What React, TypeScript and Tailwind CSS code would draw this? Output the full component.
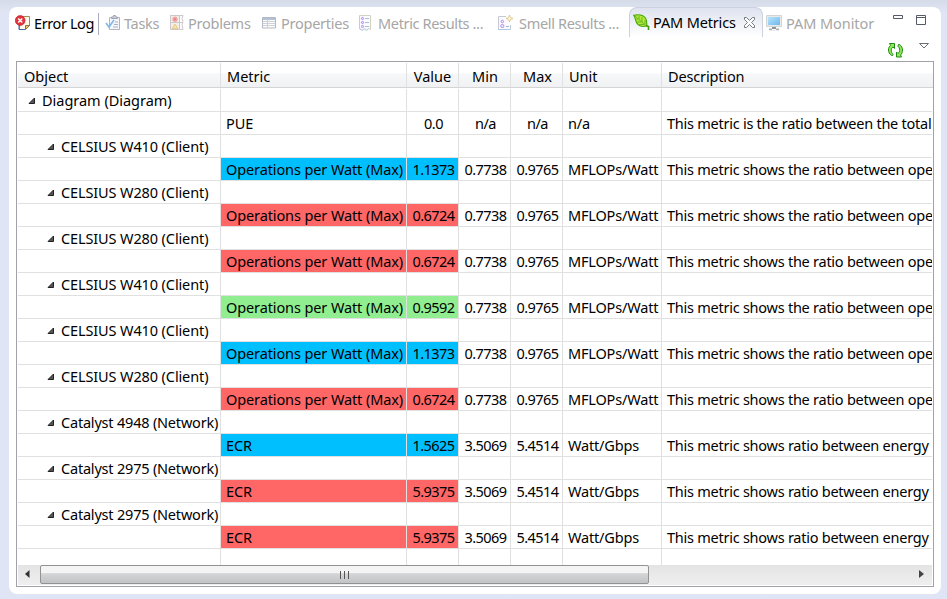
import type { ReactNode } from "react";

type Row = {
  object?: string;
  level?: number;
  metric?: string;
  value?: string;
  min?: string;
  max?: string;
  unit?: string;
  description?: string;
  tone?: "blue" | "red" | "green";
};

const tones = { blue: "bg-[#00bfff]", red: "bg-[#ff6666]", green: "bg-[#90ee90]" };

const client = (object: string, value: string, tone: Row["tone"]): Row[] => [
  { object, level: 1 },
  { metric: "Operations per Watt (Max)", value, min: "0.7738", max: "0.9765", unit: "MFLOPs/Watt", description: "This metric shows the ratio between ope", tone },
];
const network = (object: string, value: string, tone: Row["tone"]): Row[] => [
  { object, level: 1 },
  { metric: "ECR", value, min: "3.5069", max: "5.4514", unit: "Watt/Gbps", description: "This metric shows ratio between energy", tone },
];

const rows: Row[] = [
  { object: "Diagram (Diagram)", level: 0 },
  { metric: "PUE", value: "0.0", min: "n/a", max: "n/a", unit: "n/a", description: "This metric is the ratio between the total" },
  ...client("CELSIUS W410 (Client)", "1.1373", "blue"),
  ...client("CELSIUS W280 (Client)", "0.6724", "red"),
  ...client("CELSIUS W280 (Client)", "0.6724", "red"),
  ...client("CELSIUS W410 (Client)", "0.9592", "green"),
  ...client("CELSIUS W410 (Client)", "1.1373", "blue"),
  ...client("CELSIUS W280 (Client)", "0.6724", "red"),
  ...network("Catalyst 4948 (Network)", "1.5625", "blue"),
  ...network("Catalyst 2975 (Network)", "5.9375", "red"),
  ...network("Catalyst 2975 (Network)", "5.9375", "red"),
];

const columns = "grid grid-cols-[203px_186px_52px_52px_52px_99px_270px]";
const cell = "overflow-hidden border-r border-[#e0e0e0] whitespace-pre";

function ErrorLogIcon() {
  return (
    <svg width="16" height="16" viewBox="0 0 16 16" className="shrink-0">
      <path d="M6 1.5h8.5v9l-4 4H4.5V9" fill="#fffbe8" stroke="#a58b50" />
      <path d="M14.5 10.5h-4v4z" fill="#e8c770" stroke="#8a7540" />
      <path d="M4 10v4.5h6" fill="none" stroke="#47649c" />
      <circle cx="5.2" cy="5.5" r="4.9" fill="#e3343e" stroke="#b81722" strokeWidth=".6" />
      <path d="M3.2 3.5l4 4m0-4l-4 4" stroke="#fff" strokeWidth="1.6" />
    </svg>
  );
}
function TasksIcon() {
  return (
    <svg width="16" height="16" viewBox="0 0 16 16" className="shrink-0">
      <path d="M4.5 2.5h10v12h-10z" fill="#f4f6fb" stroke="#b0b4bf" />
      <path d="M6.5 3.5V2h1.5l.5-1.5h2L11 2h1.5v1.5z" fill="#c9ccd6" stroke="#a2a7b5" />
      <path d="M10 7h3M9 9.5h4M8 12h5" stroke="#a9b2c8" />
      <path d="M1 8l3 4 5-7" fill="none" stroke="#86b8e6" strokeWidth="1.7" />
    </svg>
  );
}
function ProblemsIcon() {
  return (
    <svg width="14" height="16" viewBox="0 0 14 16" className="shrink-0">
      <path d="M.5.5h9v14h-9z" fill="#f3efe9" stroke="#cbc7ca" />
      <path d="M9.500.5h3.500l-1 3 1 3-1 3 1 5H9.500M.5 7.500h12" fill="none" stroke="#cbc7ca" />
      <circle cx="5" cy="4.3" r="2.7" fill="#f3abab" />
      <path d="M3.900 3.200l2.200 2.200m0-2.200L3.900 5.400" stroke="#e8777e" />
      <path d="M5 9l2.800 4.600H2.200z" fill="#f8e3b0" stroke="#e5c078" strokeWidth=".8" />
    </svg>
  );
}
function PropertiesIcon() {
  return (
    <svg width="14" height="12" viewBox="0 0 14 12" className="shrink-0">
      <path d="M.5.5h13v10.500H.5z" fill="#fcfcfa" stroke="#b3b8c4" />
      <path d="M1 1h12v2H1z" fill="#b7c1d5" />
      <path d="M1 4.500h12M1 6.500h12M1 8.500h12M5.500 3v8" stroke="#ced2d7" />
    </svg>
  );
}
function MetricResultsIcon() {
  return (
    <svg width="12" height="16" viewBox="0 0 12 16" className="shrink-0">
      <path d="M.5.5h11v14l-2-1-2 1.500-2-1.500-2 1.500-3-1.500z" fill="#fbfcff" stroke="#d0d2c4" />
      <path d="M.5 1v13l3 1.500 2-1.500 2 1.500 2-1.500" fill="none" stroke="#b8cfe7" />
      <path d="M6 3.500h4M6 7.500h4M6 11.500h4" stroke="#a9bddd" />
      <g fill="#eadcff" stroke="#b98bea"><circle cx="3.500" cy="3.500" r="1.100" /><circle cx="3.500" cy="7.500" r="1.100" /><circle cx="3.500" cy="11.500" r="1.100" /></g>
    </svg>
  );
}
function SmellResultsIcon() {
  return (
    <svg width="15" height="16" viewBox="0 0 15 16" className="shrink-0">
      <path d="M8 1.500H.5v13h12V10" fill="#fbfcff" stroke="#c5c9d2" />
      <path d="M.5 14.500h12" stroke="#a9c9e8" />
      <g fill="#f3eaff" stroke="#b88ceb"><circle cx="4.300" cy="6.500" r="1.300" /><circle cx="4.300" cy="11" r="1.600" /></g>
      <path d="M8 11.500h3" stroke="#9eb5da" />
      <path d="M11.500 0l1 2.500L15 3.500l-2.500 1-1 2.500-1-2.500L8 3.500l2.500-1z" fill="#fff5d9" stroke="#d9bf83" strokeWidth=".8" />
    </svg>
  );
}
function LeafIcon() {
  return (
    <svg width="17" height="17" viewBox="0 0 17 17" className="shrink-0">
      <path d="M.7 1.200C6 .2 10 .8 12.500 4c1.500 2.500 1.400 5 1.300 7.800-3 1-6.600.7-8.800-1.200C2 8.200 3 4.500.7 1.200z" fill="#b5e838" stroke="#45a50b" strokeWidth="1.100" />
      <path d="M2 2l12 10.500M6 5.500V2M9 8V3M12 10V6M5 5H3M8.500 8H4M11 10.500H6" fill="none" stroke="#5eb820" strokeWidth=".9" />
      <path d="M13 11.500l2.500 1v3.500" fill="none" stroke="#439b0b" strokeWidth="1.600" />
    </svg>
  );
}
function MonitorIcon() {
  return (
    <svg width="16" height="16" viewBox="0 0 16 16" className="shrink-0">
      <defs>
        <linearGradient id="screen" x2="1" y2="1"><stop stopColor="#b9e4fb" /><stop offset="1" stopColor="#6eb8ee" /></linearGradient>
      </defs>
      <path d="M.5.5h15v11H.5z" fill="#e9ebea" stroke="#d2d5d5" />
      <path d="M2 2h12v8H2z" fill="url(#screen)" />
      <path d="M6 12h4v2H6z" fill="#8f9499" />
      <path d="M3 13.500h3v1.500h4v-1.500h3v1.700H3z" fill="#a8aeb5" />
    </svg>
  );
}
function CloseIcon() {
  return (
    <svg width="11" height="11" viewBox="0 0 11 11" className="shrink-0">
      <path d="M.5.5h2L5.500 3.500 8.500.5h2v2L7.500 5.500l3 3v2h-2l-3-3-3 3h-2v-2l3-3-3-3z" fill="#fff" stroke="#666b73" strokeWidth=".9" />
    </svg>
  );
}
function RefreshIcon() {
  return (
    <svg width="15" height="15" viewBox="0 0 15 15">
      <g fill="#8fe85a" stroke="#1f8a12">
        <path d="M4.500 12.500h-1C1.500 11 .5 9.300.5 7s.8-3.600 2-4.500L1.500.5h5v5L5 4C3.800 4.800 3.300 5.800 3.300 7.300c0 1.700.5 2.900 1.700 3.900z" />
        <path d="M10.500 1.500h1c2 1.500 3 3.200 3 5.500s-.8 4.100-2 5l1 2h-5v-5l1.500 1.500c1.200-.8 1.700-1.800 1.700-3.300 0-1.700-.5-2.900-1.700-3.900z" />
      </g>
    </svg>
  );
}

function Tab({ icon, label, className }: { icon: ReactNode; label: string; className: string }) {
  return (
    <div className={`flex h-[31px] shrink-0 items-center whitespace-nowrap ${className}`}>
      {icon}
      <span className="leading-5">{label}</span>
    </div>
  );
}

function Expander() {
  return (
    <svg width="8" height="8" viewBox="0 0 8 8" className="shrink-0">
      <path d="M6.500 1v5.500H1z" fill="#555" stroke="#222" />
    </svg>
  );
}

function ObjectCell({ row }: { row: Row }) {
  if (!row.object) return null;
  return (
    <div className={`flex items-center gap-[6px] ${row.level ? "pl-[29px]" : "pl-[10px]"}`}>
      <Expander />
      <span className={row.object.startsWith("Cata") ? "tracking-[-0.2px]" : row.level ? "tracking-[-0.12px]" : "tracking-[-0.02px]"}>{row.object}</span>
    </div>
  );
}

export default function App() {
  return (
    <div className="h-[599px] w-[947px] overflow-hidden bg-linear-to-b from-[#d6dbe8] from-0% via-[#e0e5f5] via-2% to-[#dfe5f4] pt-[7px] pl-[9px] font-['Noto_Sans','Open_Sans',sans-serif] text-[14.5px] text-black">
      <div className="h-[587px] w-[932px] rounded-[8px] bg-white">
        <div className="flex h-[31px] text-[#a6a6a6]">
          <Tab icon={<ErrorLogIcon />} label="Error Log" className="w-[90px] gap-[3px] pl-[6px] tracking-[-0.4px] text-black" />
          <div className="mt-[6px] mr-[7px] -ml-px h-[22px] w-px bg-[#a7adbf]" />
          <Tab icon={<TasksIcon />} label="Tasks" className="-ml-px w-[65px] gap-[3px] tracking-[-0.3px]" />
          <Tab icon={<ProblemsIcon />} label="Problems" className="w-[92px] gap-[4px] tracking-[-0.25px]" />
          <Tab icon={<PropertiesIcon />} label="Properties" className="w-[97px] gap-[5px] tracking-[-0.25px]" />
          <Tab icon={<MetricResultsIcon />} label="Metric Results ..." className="w-[139px] gap-[7px] tracking-[-0.35px]" />
          <Tab icon={<SmellResultsIcon />} label="Smell Results ..." className="w-[131px] gap-[6px] tracking-[-0.32px]" />
          <div className="flex h-[30px] w-[134px] shrink-0 items-center rounded-t-[8px] border-x border-t border-[#cbd1df] bg-linear-to-b from-[#dfe3ef] to-white pl-[3px] text-black">
            <LeafIcon />
            <span className="ml-[3px] w-[91px] whitespace-nowrap tracking-[-0.15px]">PAM Metrics</span>
            <CloseIcon />
          </div>
          <Tab icon={<MonitorIcon />} label="PAM Monitor" className="w-[130px] gap-[4px] pl-[3px] tracking-[-0.07px]" />
          <svg width="38" height="18" viewBox="0 0 38 18" className="mt-[5px] shrink-0">
            <path d="M.5 3.500h9v3h-9zM23.500 3.500h9v9h-9zM23.500 5.500h9" fill="none" stroke="#555b66" />
          </svg>
        </div>
        <div className="flex h-[23px] items-start justify-end gap-4 pt-[5px] pr-[12px]">
          <RefreshIcon />
          <svg width="10" height="6" viewBox="0 0 10 6"><path d="M.5.5h9L5 5z" fill="#fff" stroke="#6b6f78" /></svg>
        </div>
        <div className="ml-[7px] h-[526px] w-[918px] border border-[#a0a2a8] pt-px pl-px">
          <div className={`${columns} h-[25px] border-b border-[#d4d4d4] bg-linear-to-b from-white from-40% via-[#f7f8fa] via-45% to-[#f0f1f3] leading-[27px]`}>
            <div className={`${cell} pl-[6px]`}>Object</div>
            <div className={`${cell} pl-[6px]`}>Metric</div>
            <div className={`${cell} text-center`}>Value</div>
            <div className={`${cell} pl-px text-center`}>Min</div>
            <div className={`${cell} pl-[2px] text-center`}>Max</div>
            <div className={`${cell} pl-[6px]`}>Unit</div>
            <div className="overflow-hidden pl-[6px] tracking-[-0.15px]">Description</div>
          </div>
          <div className="h-[477px] w-[914px] overflow-hidden">
            {rows.map((row, i) => (
              <div key={i} className={`${columns} border-b border-[#e0e0e0] leading-[23px] ${i === 0 ? "h-[24px] pt-px" : "h-[23px]"}`}>
                <div className={cell}><ObjectCell row={row} /></div>
                <div className={`${cell} pl-[5px] ${row.tone ? tones[row.tone] : ""} tracking-[-0.11px]`}>{row.metric}</div>
                <div className={`${cell} pl-[2px] text-center tracking-[-0.55px] ${row.tone ? tones[row.tone] : ""}`}>{row.value}</div>
                <div className={`${cell} pl-[2px] text-center tracking-[-0.55px]`}>{row.min}</div>
                <div className={`${cell} pl-[2px] text-center tracking-[-0.55px]`}>{row.max}</div>
                <div className={`${cell} pl-[5px] tracking-[-0.18px]`}>{row.unit}</div>
                <div className="overflow-hidden pl-[5px] whitespace-pre tracking-[-0.25px]">{row.description}</div>
              </div>
            ))}
            <div className={`${columns} h-[16px]`}>
              <div className={cell} /><div className={cell} /><div className={cell} /><div className={cell} /><div className={cell} /><div className={cell} /><div />
            </div>
          </div>
          <div className="flex h-[20px] w-[914px] items-start bg-linear-to-b from-[#e4e4e4] to-[#efefef]">
            <svg width="22" height="19" viewBox="0 0 22 19"><path d="M11.500 5v8L7 9z" fill="#333" /></svg>
            <div className="flex h-[19px] w-[609px] items-center justify-center gap-[3px] rounded-[2px] border border-[#929292] bg-linear-to-b from-[#f4f4f4] from-40% via-[#d4d5d7] via-45% to-[#c2c3c6]">
              <div className="h-[8px] w-px bg-[#555]" /><div className="h-[8px] w-px bg-[#555]" /><div className="h-[8px] w-px bg-[#555]" />
            </div>
            <svg width="22" height="19" viewBox="0 0 22 19" className="ml-auto"><path d="M9 5v8l5-4z" fill="#444" /></svg>
          </div>
        </div>
      </div>
    </div>
  );
}
